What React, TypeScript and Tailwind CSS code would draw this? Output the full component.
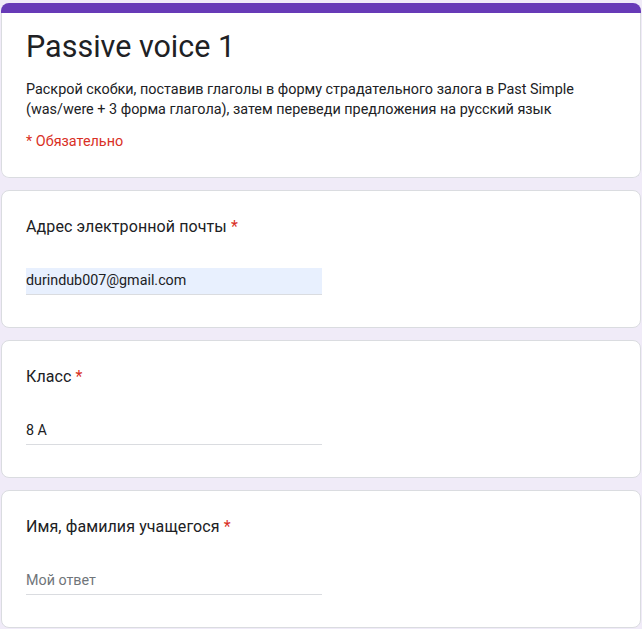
import React from "react";

const font = { fontFamily: "Roboto, 'Noto Sans', Arial, sans-serif" };

function Req() {
  return <span className="text-[#d93025]"> *</span>;
}

function Question({
  label,
  value,
  placeholder,
  filled,
}: {
  label: string;
  value?: string;
  placeholder?: string;
  filled?: boolean;
}) {
  return (
    <div className="bg-white rounded-lg border border-[#dadce0] px-[24px] pt-[24px] pb-[32px]">
      <div className="text-[16px] leading-[24px] text-[#202124] tracking-[0.1px]">
        {label}
        <Req />
      </div>
      <div className="mt-[29px] w-[296px]">
        <div
          className={
            "h-[27px] flex items-center text-[14.3px] border-b border-[#dadce0] " +
            (filled ? "bg-[#e8f0fe] " : "") +
            (value ? "text-[#202124]" : "text-[#70757a]")
          }
        >
          {value ?? placeholder}
        </div>
      </div>
    </div>
  );
}

export default function App() {
  return (
    <div
      className="min-h-[629px] bg-[#f0ebf8] px-[1px] pt-[3px] pb-[2px] flex flex-col gap-[12px] w-[642px]"
      style={font}
    >
      <div className="rounded-lg overflow-hidden">
        <div className="h-[10px] bg-[#673ab7]" />
        <div className="bg-white border-x border-b border-[#dadce0] rounded-b-lg px-[24px] pt-[14px] pb-[25px]">
          <div className="text-[30.5px] leading-[40px] text-[#202124]">Passive voice 1</div>
          <div className="mt-[13px] text-[14.4px] leading-[20px] text-[#202124]">
            Раскрой скобки, поставив глаголы в форму страдательного залога в Past Simple
            <br />
            (was/were + 3 форма глагола), затем переведи предложения на русский язык
          </div>
          <div className="mt-[12px] text-[14.4px] leading-[20px] text-[#d93025]">* Обязательно</div>
        </div>
      </div>
      <Question label="Адрес электронной почты" value="durindub007@gmail.com" filled />
      <Question label="Класс" value="8 A" />
      <Question label="Имя, фамилия учащегося" placeholder="Мой ответ" />
    </div>
  );
}
